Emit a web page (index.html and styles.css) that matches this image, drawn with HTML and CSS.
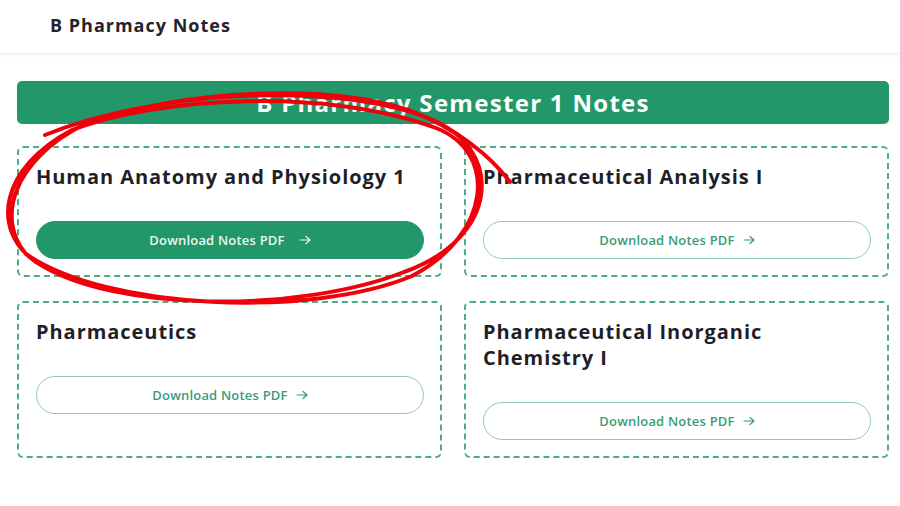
FILE: index.html
```html
<!DOCTYPE html>
<html lang="en">
<head>
<meta charset="utf-8">
<title>B Pharmacy Notes</title>
<link rel="stylesheet" href="styles.css">
</head>
<body>
<header class="site-header">
  <div class="brand">B Pharmacy Notes</div>
</header>
<main class="content">
  <h1 class="banner">B Pharmacy Semester 1 Notes</h1>
  <div class="grid">
    <div class="card">
      <h2 class="card-title">Human Anatomy and Physiology 1</h2>
      <a class="btn btn-filled" href="#">Download Notes PDF <svg class="arrow" viewBox="0 0 12 10" width="12" height="10"><path d="M1 5 H11 M7 1.5 L11 5 L7 8.5" fill="none" stroke="currentColor" stroke-width="1.2" stroke-linecap="round" stroke-linejoin="round"/></svg></a>
    </div>
    <div class="card">
      <h2 class="card-title">Pharmaceutical Analysis I</h2>
      <a class="btn btn-outline" href="#">Download Notes PDF <svg class="arrow" viewBox="0 0 12 10" width="12" height="10"><path d="M1 5 H11 M7 1.5 L11 5 L7 8.5" fill="none" stroke="currentColor" stroke-width="1.2" stroke-linecap="round" stroke-linejoin="round"/></svg></a>
    </div>
    <div class="card">
      <h2 class="card-title">Pharmaceutics</h2>
      <a class="btn btn-outline" href="#">Download Notes PDF <svg class="arrow" viewBox="0 0 12 10" width="12" height="10"><path d="M1 5 H11 M7 1.5 L11 5 L7 8.5" fill="none" stroke="currentColor" stroke-width="1.2" stroke-linecap="round" stroke-linejoin="round"/></svg></a>
    </div>
    <div class="card">
      <h2 class="card-title">Pharmaceutical Inorganic<br>Chemistry I</h2>
      <a class="btn btn-outline" href="#">Download Notes PDF <svg class="arrow" viewBox="0 0 12 10" width="12" height="10"><path d="M1 5 H11 M7 1.5 L11 5 L7 8.5" fill="none" stroke="currentColor" stroke-width="1.2" stroke-linecap="round" stroke-linejoin="round"/></svg></a>
    </div>
  </div>
</main>
<svg class="scribble" viewBox="0 0 900 506" width="900" height="506" aria-hidden="true">
  <path d="M45 135 C150 92 330 80 428 118 C506 148 500 238 404 272 C302 312 116 314 36 262 C-10 230 0 168 72 130 C160 96 330 88 436 128 C498 152 492 234 412 276 C312 318 106 310 26 254 C-4 220 12 160 85 124 C190 88 330 84 408 110 C458 128 492 158 510 182"
        fill="none" stroke="#f0000a" stroke-width="4" stroke-linecap="round" stroke-linejoin="round"/>
</svg>
</body>
</html>
```
FILE: styles.css
```css
* { box-sizing: border-box; }
html, body { margin: 0; padding: 0; background: #ffffff; }
body {
  font-family: "Open Sans", "Noto Sans", "Liberation Sans", sans-serif;
  color: #1f1f29;
  width: 900px;
  height: 506px;
  overflow: hidden;
  position: relative;
}
.site-header {
  height: 54px;
  display: flex;
  align-items: center;
  padding-left: 50px;
  padding-bottom: 4px;
  border-bottom: 1px solid #ececec;
  box-shadow: 0 2px 3px rgba(0,0,0,0.04);
}
.brand {
  font-size: 18px;
  font-weight: 700;
  color: #23232d;
  letter-spacing: 1px;
}
.content {
  padding: 27px 11px 0 17px;
}
.banner {
  margin: 0;
  height: 43px;
  background: #22986a;
  border-radius: 5px;
  color: #ffffff;
  font-size: 24px;
  font-weight: 700;
  letter-spacing: 1.3px;
  display: flex;
  align-items: center;
  justify-content: center;
}
.grid {
  margin-top: 22px;
  display: grid;
  grid-template-columns: 1fr 1fr;
  column-gap: 22px;
  row-gap: 24px;
}
.card {
  border: 2px dashed #4cac86;
  border-radius: 6px;
  padding: 16px 16px 16px 17px;
  display: flex;
  flex-direction: column;
}
.card-title {
  margin: 0 0 31px 0;
  font-size: 20px;
  line-height: 26px;
  font-weight: 700;
  letter-spacing: 0.95px;
  color: #1f1f29;
}
.btn {
  display: flex;
  align-items: center;
  justify-content: center;
  gap: 8px;
  height: 38px;
  border-radius: 19px;
  font-size: 13px;
  font-weight: 600;
  letter-spacing: 0.2px;
  text-decoration: none;
}
.btn-filled {
  background: #22986a;
  color: #e9f6f0;
  border: 1.5px solid #22986a;
}
.btn-filled .arrow { margin-left: 6px; }
.btn-outline {
  background: #ffffff;
  color: #3a9c77;
  border: 1.5px solid #8ccdb2;
}
.arrow { display: block; flex: none; }
.scribble {
  position: absolute;
  left: 0;
  top: 0;
  pointer-events: none;
}
```
